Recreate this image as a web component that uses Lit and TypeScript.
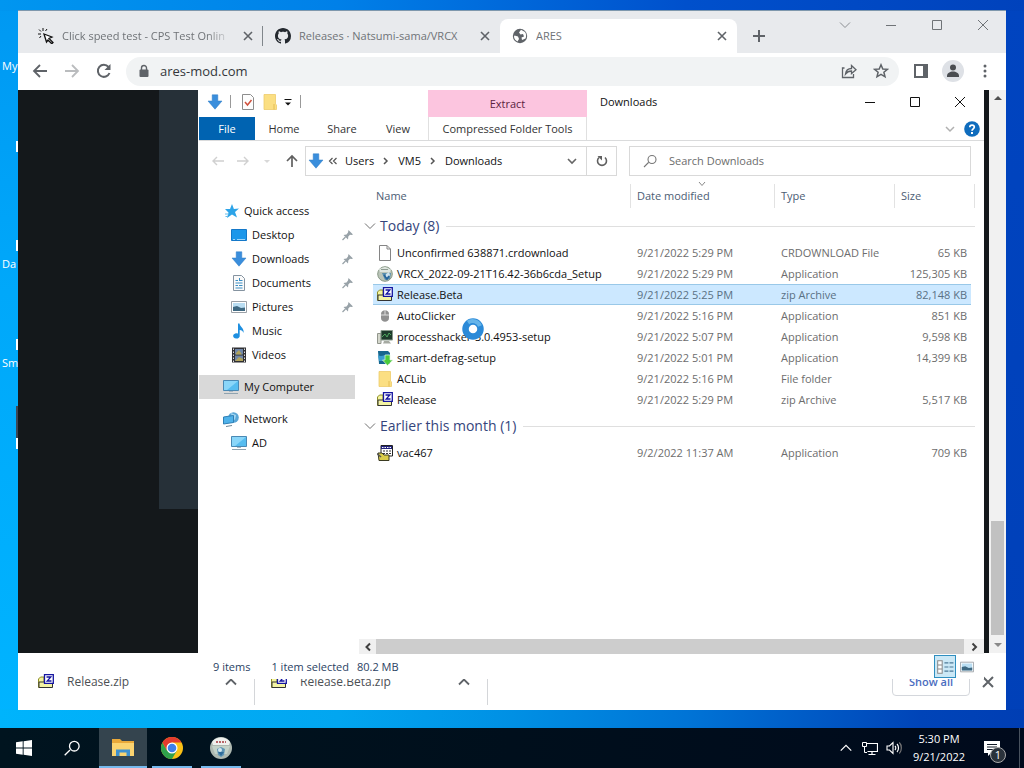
import { LitElement, html, css, svg, nothing } from "lit";
import { customElement, property } from "lit/decorators.js";
import { classMap } from "lit/directives/class-map.js";

const line = (d: string, color = "#5f6368", w = 2) =>
  svg`<path d=${d} fill="none" stroke=${color} stroke-width=${w} />`;

const glyphs: Record<string, unknown> = {
  click: svg`<path d="M6 6 14 9 11 10.500 15 14.500 13.800 15.800 10 12 8.500 14Z" fill="#fff" stroke="#111" stroke-width="1.300"/><path d="M5 0V3M1 1.500 3 3.500M0 6H3M9 1 7.500 3M1.500 10 3 8" stroke="#111" fill="none"/>`,
  github: svg`<path fill="#24292f" d="M8 0C3.580 0 0 3.580 0 8c0 3.540 2.290 6.530 5.470 7.590.4.070.550-.170.550-.380 0-.190-.010-.820-.010-1.490-2.010.370-2.530-.490-2.690-.940-.090-.230-.480-.940-.820-1.130-.280-.150-.680-.520-.010-.530.630-.010 1.080.580 1.230.820.720 1.210 1.870.870 2.330.660.070-.520.280-.870.510-1.070-1.780-.2-3.640-.890-3.640-3.950 0-.870.310-1.590.820-2.150-.080-.2-.360-1.020.080-2.120 0 0 .670-.210 2.200.820.640-.180 1.320-.270 2-.270s1.360.090 2 .270c1.530-1.040 2.200-.820 2.200-.820.440 1.100.160 1.920.080 2.120.510.560.820 1.270.820 2.150 0 3.070-1.870 3.750-3.650 3.950.290.250.540.730.540 1.480 0 1.070-.010 1.930-.010 2.200 0 .210.150.460.550.380A8 8 0 0 0 16 8c0-4.420-3.580-8-8-8z"/>`,
  globe: svg`<circle cx="8" cy="8" r="7.200" fill="#5f6368"/><path d="M2.500 7.500 6 8.500l1 2.500-1.500 2.500C3.500 12.500 2 10.500 2 8.500ZM9 1.800 7 4.500 8.500 6.500 11 6l1 2.500-2.500 1L10 12l3.500-1.500c1-2 .8-4.500-.5-6.500Z" fill="#fff"/>`,
  x: line("M4 4 12 12M12 4 4 12", "#5f6368", 1.6),
  plus: line("M8 2V14M2 8H14"),
  back: line("M15 8H2M8 2 2 8l6 6", "#5f6368", 1.8),
  forward: line("M1 8H14M8 2l6 6-6 6", "#babcbe", 1.8),
  reload: svg`${line("M13.500 10A6 6 0 1 1 12.500 4", "#5f6368", 2)}<path d="M14.500 1V7H8.500Z" fill="#5f6368"/>`,
  lock: svg`<rect x="3.500" y="6.500" width="9" height="7.500" rx="1" fill="#5f6368"/>${line("M5.500 7V5a2.500 2.500 0 0 1 5 0V7", "#5f6368", 1.4)}`,
  share: line("M3.500 5H1.500V14.500H12.500V11M4.500 11C5 7 8 5.500 10.500 5.500V2.500L15 6.800 10.500 10.500V8C8 8 6 9 4.500 11Z", "#5f6368", 1.3),
  star: line("M8 1.800 9.800 6 14.400 6.300 10.900 9.300 12 13.800 8 11.400 4 13.800 5.100 9.300 1.600 6.300 6.200 6Z", "#5f6368", 1.5),
  panel: svg`<path d="M1 1H15V15H1Z" fill="#5f6368"/><path d="M3 3H10V13H3Z" fill="#fff"/>`,
  person: svg`<circle cx="12" cy="12" r="11" fill="#dee1e6"/><circle cx="12" cy="8.500" r="3" fill="#4a4d51"/><path d="M6 17c0-3 3-4.500 6-4.500s6 1.500 6 4.500v1H6Z" fill="#4a4d51"/>`,
  dots: svg`<g fill="#5f6368"><circle cx="8" cy="3" r="1.500"/><circle cx="8" cy="8" r="1.500"/><circle cx="8" cy="13" r="1.500"/></g>`,
  winDown: line("M3 5.500 8 10.500 13 5.500", "#8b8e92", 1),
  winMin: line("M3 8.500H13", "currentColor", 1),
  winMax: line("M3.500 3.500H12.500V12.500H3.500Z", "currentColor", 1),
  winClose: line("M3 3 13 13M13 3 3 13", "currentColor", 1),
  down: svg`<path d="M5.200.8H10.800V7H15L8 15.200 1 7H5.200Z" fill="#3a8edc" stroke="#2f7dc6" stroke-width=".5"/>`,
  check: svg`<path d="M2.500.5H10.500L13.500 3.500V15.500H2.500Z" fill="#fdfdfd" stroke="#8d8d8d"/><path d="M5 8 7.500 11 11.500 6" fill="none" stroke="#d0503c" stroke-width="1.500"/>`,
  folder: svg`<path d="M2 .5H13.500V10L14.500 11V15.500H2Z" fill="#fbdf83" stroke="#edcc6c" stroke-width=".8"/><path d="M12 10V15.500" stroke="#e4bd54"/>`,
  qat: svg`<path d="M4.500 5.500H11.500" stroke="#111"/><path d="M5 8.500H11L8 11.500Z" fill="#111"/>`,
  chev: line("M4 6 8 10 12 6", "#666", 1.6),
  chevThin: line("M3 5.500 8 10.500 13 5.500", "#707070", 1),
  chevLight: line("M4 6 8 10 12 6", "#b0b0b0", 1.5),
  chevUp: line("M3 10.500 8 5.500 13 10.500", "#5f6368", 1.8),
  right: line("M6 5 9 8 6 11", "#555", 1.5),
  dbl: line("M7.500 5 4.500 8 7.500 11M11.500 5 8.500 8 11.500 11", "#555", 1.2),
  exBack: line("M14 8H3M7 4 3 8l4 4", "#d0d0d0", 1.4),
  exFwd: line("M2 8H13M9 4l4 4-4 4", "#d0d0d0", 1.4),
  exUp: line("M8 14V3M3 8 8 3l5 5", "#606060", 1.7),
  caret: svg`<path d="M5 7H11L8 10Z" fill="#d8d8d8"/>`,
  refresh: svg`${line("M5 4.500A4.500 4.500 0 1 0 11 4.500", "#606060", 1.6)}<path d="M3.500 3H8V7.500Z" fill="#606060"/>`,
  search: line("M6.500 9.500 2 14M6 6.500a4 4 0 1 0 8 0a4 4 0 1 0-8 0", "#777", 1.1),
  help: svg`<circle cx="8" cy="8" r="7.800" fill="#0f6cbd"/>${line("M5.800 6.200C5.800 3.300 10.300 3.400 10.300 6.100 10.300 7.800 8 7.900 8 9.800", "#fff", 1.7)}<path d="M7 11H9V13H7Z" fill="#fff"/>`,
  quick: svg`<path d="M9 1 10.900 6 16 5.500 12 9 14 14.500 9 11.500 4 15 5.500 9.500 2 6 7 6Z" fill="#2da4e8"/>${line("M2 11H6M2.500 13.500H5", "#67bdec", 1)}`,
  desktop: svg`<path d="M.5 2.500H15.500V13.500H.5Z" fill="#1c97ea" stroke="#1478c8"/><path d="M2 12.500H4M6 12.500H14" stroke="#9fd6fa"/>`,
  doc: svg`<path d="M2.500.5H10.500L13.500 3.500V15.500H2.500Z" fill="#fafafa" stroke="#8593a0"/><path d="M4.500 5.500H7M8 5.500H11.500M4.500 8H11.500M4.500 10.500H7M8 10.500H11.500M4.500 13H11.500" stroke="#3c8fc4"/><path d="M8.500 3V6" stroke="#3c8fc4"/>`,
  picture: svg`<path d="M.5 2.500H15.500V13.500H.5Z" fill="#fff" stroke="#9aa0a6"/><path d="M2 4H14V12H2Z" fill="#b9ddf2"/><path d="M2 8 6 7 10 9 14 8.500V12H2Z" fill="#3f6982"/>`,
  music: svg`<path d="M7 .5H8.500C9 4 13.500 5 12.500 10 12 8 10.500 7 8.700 7V12.500A3.300 2.700 0 1 1 7 10.500Z" fill="#1e8fe0"/>`,
  video: svg`<path d="M1 .5H15V15.500H1Z" fill="#2f2f33"/><path d="M4 2H12V7.500H4ZM4 8.500H12V14H4Z" fill="#6f86a8"/><path d="M5 6 8 3 11 7.500H5ZM4 14 8 10 12 12V14Z" fill="#b1a35c"/><path d="M2.500 1.500V15M13.500 1.500V15" stroke="#ddd" stroke-dasharray="1.500 1.500"/>`,
  computer: svg`<path d="M.5 1.500H15.500V11.500H.5Z" fill="#57bdf0" stroke="#4a89b4"/><path d="M1 2H15L4 11H1Z" fill="#8ad6f9"/><path d="M1 14.500H15" stroke="#8fa3b0"/><path d="M6 12H10V13H6Z" fill="#a9b8c2"/>`,
  network: svg`<circle cx="10.500" cy="6.500" r="5.300" fill="#5aa6d6"/><path d="M8 2 13 4 12 9 9 7Z" fill="#a4d7f2"/><path d="M.5 6 10.500 4.500V11.500L.5 13Z" fill="#4fb2ea" stroke="#2e7fb5"/><path d="M3 15.500 9 14.500" stroke="#6d8494"/>`,
  pin: svg`<path d="M9.500 3 14 7.500 12.500 8 11 7.700 9.300 9.500 9 12.500 4.500 8 7.500 7.500 9 5.500Z" fill="#98a2a8"/><path d="M6.500 10 3.500 13" stroke="#98a2a8" stroke-width="1.200"/>`,
  blank: svg`<path d="M2.500.5H10L13.500 4V15.500H2.500Z" fill="#fff" stroke="#858585"/><path d="M10 .5V4H13.500" fill="none" stroke="#858585"/>`,
  setup: svg`<circle cx="8" cy="8" r="7.300" fill="#bac4b8" stroke="#879785"/><path d="M2 3 8 1 14 3.500 13 6H3Z" fill="#dfe6e0"/><path d="M5 7H14L13 13 8 14Z" fill="#598ead"/><path d="M9 8 12 6 13 9 11 12 8.500 11Z" fill="#cfe3ee"/><path d="M7 9 10 13 12 10" stroke="#24649b" stroke-width="1.600" fill="none"/><path d="M4 3.500H11" stroke="#8d9a90"/>`,
  zip: svg`<path d="M.5 5 2.500 3H6V13.500H.5Z" fill="#f5f59b" stroke="#8c8c2a"/><path d="M1 8H14.500V13.500H1Z" fill="#f4f4a3" stroke="#333"/><path d="M6.500.7H15.300V9.300H6.500Z" fill="#fff" stroke="#1515a0" stroke-width="1.300"/><path d="M8.500 3H12.800L9.200 7H13.500" fill="none" stroke="#1515a0" stroke-width="1.300"/>`,
  mouse: svg`<path d="M4 6C4 1 12 1 12 6V10C12 15 4 15 4 10Z" fill="#909090"/><path d="M8 2V7M4 7H12" stroke="#ddd"/>`,
  hacker: svg`<path d="M.5 4.500H4V14.500H.5Z" fill="#d4d7cc" stroke="#92968d"/><path d="M4 1.500H15.500V11H4Z" fill="#1e3a2b" stroke="#8a9a8c"/><path d="M5 8 8 5 10 8 12 4 14 6" stroke="#4fa65f" fill="none"/><path d="M7 12H12L14 14.500H6Z" fill="#a6aaa2"/>`,
  defrag: svg`<path d="M1 1H11L13 3V14H2Z" fill="#17678f"/><path d="M1 5C5 8 9 3 13 5V11H2Z" fill="#3a9ed0"/><path d="M8 5H13V10H15.800L10.500 15.500 5.500 10H8Z" fill="#4ccb3c" stroke="#e1f5de" stroke-width=".7"/>`,
  vac: svg`<path d="M4 .5H15.500V11H4Z" fill="#fff" stroke="#222"/><path d="M4 1H15V4H4Z" fill="#24247e"/><path d="M5 2.500H14" stroke="#fff" stroke-dasharray="1.500 1"/><path d="M6 6H14M6 8.500H14" stroke="#333" stroke-dasharray="2 1"/><path d="M1 8H5L7 10H12V15.500H2Z" fill="#d9cc4a" stroke="#3b3b22"/><path d="M0 8.500 4 12" stroke="#555" stroke-width="1.500"/>`,
  details: svg`<path d="M1.500 2.500H5.500V13.500H1.500ZM1.500 6.200H5.500M1.500 9.800H5.500" fill="#fff" stroke="#888" stroke-width=".9"/><path d="M7.500 4.300H15.500M7.500 8H15.500M7.500 11.700H15.500" stroke="#4c7896" stroke-dasharray="3.500 1" stroke-width="1"/>`,
  start: svg`<path fill="#fff" d="M0 2.300 6.700 1.300V7.600H0ZM7.600 1.200 16 0V7.600H7.600ZM0 8.500H6.700V14.700L0 13.700ZM7.600 8.500H16V16L7.600 14.800Z"/>`,
  taskSearch: line("M6 10 .7 15.300M5.500 6.200a4.800 4.800 0 1 0 9.600 0a4.800 4.800 0 1 0-9.600 0", "#fff", 1.3),
  explorer: svg`<path d="M1 3H9L11 5H23V20H1Z" fill="#e9a93a"/><path d="M1 7H23V20H1Z" fill="#fbd470"/><path d="M5 20V13.500H19V20H15.500V16.500H8.500V20Z" fill="#3f91cf"/>`,
  chrome: svg`<circle cx="12" cy="12" r="11" fill="#fbc116"/><path d="M2.470 6.500A11 11 0 0 0 12 23L16.800 14.700 7 14.500Z" fill="#2fa24c"/><path d="M2.470 6.500A11 11 0 0 1 21.530 6.500H12L7 14.500Z" fill="#e33b2e"/><circle cx="12" cy="12" r="5.500" fill="#fff"/><circle cx="12" cy="12" r="4.300" fill="#3f7fea"/>`,
  vrcx: svg`<circle cx="12" cy="12" r="11" fill="#aeb9b1"/><path d="M3 6C7 0 17 0 21 6L20 9H4Z" fill="#eef1ee"/><path d="M7 6H17" stroke="#b8666a" stroke-width="2" stroke-dasharray="2 1"/><path d="M3 10H21L18 18H6Z" fill="#c3d2c8"/><path d="M8 13 12 11 16 13 15 19 12 21 9 19Z" fill="#5d94b4"/><path d="M9 16H15L12 20Z" fill="#2f6c9a"/><circle cx="11" cy="14" r="2" fill="#d4e8f0"/>`,
  trayUp: line("M2 11 8 5l6 6", "#fff", 1.4),
  trayNet: svg`<path d="M4.500 3.500H15.500V11.500H5.500M10 12V14.500M6.500 14.500H13.500" fill="none" stroke="#fff" stroke-width="1.200"/><path d="M.5 2.500H4.500V6.500H.5ZM2.500 7V12.500H5" fill="none" stroke="#fff"/>`,
  sound: svg`<path d="M1 6H3.500L7 2.500V13.500L3.500 10H1Z" fill="none" stroke="#fff" stroke-width="1.100"/><path d="M9 6C10 7 10 9 9 10M11 4C13 6 13 10 11 12" fill="none" stroke="#fff" stroke-width="1.200"/><path d="M13.300 2.500C16 5 16 11 13.300 13.500" fill="none" stroke="#777" stroke-width="1.200"/>`,
  note: svg`<path d="M0 1H16V13H7L4 16V13H0Z" fill="#fff"/><path d="M3 4.500H13M3 7H13M3 9.500H13" stroke="#111a26"/>`,
  sUp: svg`<path d="M4 10H12L8 6Z" fill="#505050"/>`,
  sDown: svg`<path d="M4 6H12L8 10Z" fill="#8a8a8a"/>`,
  sLeft: line("M10 4.500 6.500 8 10 11.500", "#404040", 2),
  sRight: line("M6.500 4.500 10 8 6.500 11.500", "#404040", 2),
};

const ico = (name: string, size = 16) => {
  const box = ["explorer", "chrome", "vrcx", "person"].includes(name) ? 24 : 16;
  return html`<svg class="ico" width=${size} height=${size} viewBox="0 0 ${box} ${box}" aria-hidden="true">${glyphs[name]}</svg>`;
};

const base = css`
  * { box-sizing: border-box; }
  :host { font: 11px/16px "Open Sans", "Noto Sans", sans-serif; color: #111; }
  button { font: inherit; color: inherit; background: none; border: 0; padding: 0; margin: 0; display: flex; align-items: center; justify-content: center; flex: none; white-space: nowrap; }
  a { color: inherit; text-decoration: none; }
  input { font: inherit; color: inherit; background: none; border: 0; padding: 0; min-width: 0; outline: 0; }
  .ico { display: block; flex: none; }
`;

@customElement("browser-window")
class BrowserWindow extends LitElement {
  static styles = [base, css`
    :host { display: flex; flex-direction: column; background: #fff; border-top: 1px solid #7f98ad; }
    .strip { display: flex; height: 42px; padding: 8px 0 0 8px; background: #e8eaed; color: #6f7377; flex: none; }
    .tabs { display: flex; flex: 0 1 711px; min-width: 0; }
    .tab { flex: 1; min-width: 0; display: flex; align-items: center; padding: 0 7px 0 12px; gap: 8px; }
    .tab.divided { background: linear-gradient(#80868b, #80868b) right center / 1px 20px no-repeat; }
    .tab.active { background: #fff; border-radius: 8px 8px 0 0; }
    .title { flex: 1; overflow: hidden; white-space: nowrap; }
    .divided .title { mask-image: linear-gradient(90deg, #000 85%, transparent); }
    .add { width: 44px; }
    .controls { display: flex; margin-left: auto; align-self: flex-start; height: 12px; }
    .controls button { width: 46px; }
    .bar { display: flex; align-items: center; height: 37px; padding: 0 5px 1px 6px; flex: none; }
    .nav { width: 32px; height: 32px; }
    .omni { flex: 1; display: flex; align-items: center; height: 29px; border-radius: 15px; background: #f1f3f4; margin: 0 6px; padding: 0 2px 0 10px; color: #34373b; }
    .omni input { flex: 1; margin-left: 8px; font-size: 13px; }
    .omni button { width: 32px; }
    .page { flex: 1; min-height: 0; display: flex; background: #14181b; }
    .panel { margin-left: 141px; flex: 1; height: 419px; background: #263038; margin-right: 400px; }
    .scroll { width: 17px; background: #f1f1f1; display: flex; flex-direction: column; align-items: center; justify-content: space-between; }
    .scroll .thumb { width: 13px; height: 114px; margin-top: auto; background: #c1c1c1; }
    .scroll .ico:last-child { margin-top: 2px; }
    .downloads { display: flex; height: 57px; align-items: center; flex: none; font-size: 12px; color: #4c5054; }
    .item { display: flex; align-items: center; width: 237px; height: 46px; padding: 0 15px 0 20px; border-right: 1px solid #d4d6d9; }
    .item + .item { width: 233px; padding-left: 16px; }
    .item span { flex: 1; margin-left: 13px; }
    .all { margin-left: auto; width: 78px; height: 29px; border: 1px solid #d4d7dc; border-radius: 4px; color: #4a6dc0; font-size: 11px; font-weight: 600; }
    .close { width: 36px; }
  `];

  render() {
    const tabs = [
      { icon: "click", title: "Click speed test - CPS Test Onlin", cls: "divided" },
      { icon: "github", title: "Releases · Natsumi-sama/VRCX", cls: "" },
      { icon: "globe", title: "ARES", cls: "active" },
    ];
    return html`
      <div class="strip">
        <div class="tabs" role="tablist">
          ${tabs.map(t => html`<div class="tab ${t.cls}" role="tab">${ico(t.icon)}<span class="title">${t.title}</span><button aria-label="Close tab">${ico("x")}</button></div>`)}
        </div>
        <button class="add" aria-label="New tab">${ico("plus")}</button>
        <div class="controls">
          <button aria-label="Search tabs">${ico("winDown")}</button>
          <button aria-label="Minimize">${ico("winMin")}</button>
          <button aria-label="Maximize">${ico("winMax")}</button>
          <button aria-label="Close">${ico("winClose")}</button>
        </div>
      </div>
      <div class="bar">
        <button class="nav" aria-label="Back">${ico("back")}</button>
        <button class="nav" aria-label="Forward">${ico("forward")}</button>
        <button class="nav" aria-label="Reload">${ico("reload")}</button>
        <div class="omni">${ico("lock")}<input aria-label="Address" .value=${"ares-mod.com"} />
          <button aria-label="Share">${ico("share")}</button><button aria-label="Bookmark">${ico("star")}</button></div>
        <button class="nav" aria-label="Side panel">${ico("panel")}</button>
        <button class="nav" aria-label="Profile">${ico("person", 24)}</button>
        <button class="nav" aria-label="Menu">${ico("dots")}</button>
      </div>
      <div class="page"><div class="panel"></div>
        <div class="scroll">${ico("sUp")}<div class="thumb"></div>${ico("sDown")}</div></div>
      <div class="downloads">
        <div class="item">${ico("zip")}<span>Release.zip</span><button aria-label="More">${ico("chevUp")}</button></div>
        <div class="item">${ico("zip")}<span>Release.Beta.zip</span><button aria-label="More">${ico("chevUp")}</button></div>
        <button class="all">Show all</button>
        <button class="close" aria-label="Close bar">${ico("x", 20)}</button>
      </div>`;
  }
}

interface Entry { icon: string; name: string; date: string; type: string; size: string; on?: boolean; }

const groups: { label: string; rows: Entry[] }[] = [
  { label: "Today (8)", rows: [
    { icon: "blank", name: "Unconfirmed 638871.crdownload", date: "9/21/2022 5:29 PM", type: "CRDOWNLOAD File", size: "65 KB" },
    { icon: "setup", name: "VRCX_2022-09-21T16.42-36b6cda_Setup", date: "9/21/2022 5:29 PM", type: "Application", size: "125,305 KB" },
    { icon: "zip", name: "Release.Beta", date: "9/21/2022 5:25 PM", type: "zip Archive", size: "82,148 KB", on: true },
    { icon: "mouse", name: "AutoClicker", date: "9/21/2022 5:16 PM", type: "Application", size: "851 KB" },
    { icon: "hacker", name: "processhacker-3.0.4953-setup", date: "9/21/2022 5:07 PM", type: "Application", size: "9,598 KB" },
    { icon: "defrag", name: "smart-defrag-setup", date: "9/21/2022 5:01 PM", type: "Application", size: "14,399 KB" },
    { icon: "folder", name: "ACLib", date: "9/21/2022 5:16 PM", type: "File folder", size: "" },
    { icon: "zip", name: "Release", date: "9/21/2022 5:29 PM", type: "zip Archive", size: "5,517 KB" },
  ] },
  { label: "Earlier this month (1)", rows: [
    { icon: "vac", name: "vac467", date: "9/2/2022 11:37 AM", type: "Application", size: "709 KB" },
  ] },
];

@customElement("file-table")
class FileTable extends LitElement {
  @property({ attribute: false }) groups = groups;

  static styles = [base, css`
    :host { display: block; }
    table { width: 100%; table-layout: fixed; border-collapse: separate; border-spacing: 0; color: #6d6d6d; }
    th { font-weight: 400; text-align: left; }
    th, td { padding: 0; white-space: nowrap; }
    .lead { width: 9px; }
    .date { width: 144px; }
    .type { width: 120px; }
    .size { width: 76px; }
    .tail { width: 4px; }
    thead th { height: 29px; color: #4c5d74; background: linear-gradient(#e2e2e2, #e2e2e2) right 0 top 3px / 1px 24px no-repeat; }
    thead th.lead, thead th.size { background: none; }
    thead th:nth-child(2) { padding-left: 3px; }
    .date, .type, .size { padding-left: 6px; }
    thead .date div { display: grid; }
    .mark { display: block; height: 6px; width: 8px; margin: 0 0 0 61px; }
    thead .date span { height: 23px; line-height: 18px; }
    .group button { width: 100%; height: 32px; justify-content: flex-start; font-size: 14px; color: #35457c; }
    .group i { flex: 1; height: 1px; margin-left: 7px; background: #dfdfdf; }
    .group .ico { margin: 0 2px 0 -2px; }
    td { height: 21px; }
    .file { display: flex; align-items: center; gap: 4px; padding-left: 4px; color: #111; }
    td.size { text-align: right; padding: 0 4px 0 0; }
    .on td:nth-child(n+2):nth-child(-n+5) { background: #cce8ff; box-shadow: inset 0 1px #99c8e8, inset 0 -1px #99c8e8; }
    .on td { color: #5a7184; }
  `];

  render() {
    return html`<table>
      <thead><tr><th class="lead"></th><th>Name</th>
        <th class="date"><div><svg class="mark" viewBox="0 0 8 6" aria-hidden="true"><path d="M1 1 4 4.500 7 1" fill="none" stroke="#888"/></svg><span>Date modified</span></div></th>
        <th class="type">Type</th><th class="size">Size</th><th class="tail"></th></tr></thead>
      ${this.groups.map(g => html`<tbody>
        <tr class="group"><th colspan="6"><button>${ico("chevThin")}${g.label}<i></i></button></th></tr>
        ${g.rows.map(r => html`<tr class=${classMap({ on: !!r.on })}><td></td>
          <td><div class="file">${ico(r.icon)}${r.name}</div></td>
          <td class="date">${r.date}</td><td class="type">${r.type}</td><td class="size">${r.size}</td><td></td></tr>`)}
      </tbody>`)}
    </table>`;
  }
}

@customElement("explorer-window")
class ExplorerWindow extends LitElement {
  static styles = [base, css`
    :host { display: flex; flex-direction: column; background: #fff; border-left: 1px solid #fff; }
    .head { display: flex; height: 51px; border-bottom: 1px solid #dadbdc; flex: none; color: #333; }
    .head > div { display: flex; flex-direction: column; }
    .left { width: 229px; }
    .quick, .title { display: flex; align-items: center; height: 27px; flex: none; }
    .quick { padding: 0 0 4px 8px; }
    .sep { width: 1px; height: 13px; background: #999; }
    .quick .sep:nth-of-type(1) { margin: 0 9px 0 7px; }
    .quick .ico + .ico { margin-left: 6px; }
    .quick .ico + .ico + .ico { margin-left: 2px; }
    .quick .sep:last-child { margin-left: 4px; }
    .tabs { display: flex; height: 23px; }
    .tabs button { width: 58px; }
    .tabs .file { width: 56px; background: #0063b1; color: #fff; }
    .tabs .view { width: 54px; }
    .context { width: 159px; border: solid #e0e0e0; border-width: 0 1px; text-align: center; }
    .context b { font-weight: 400; background: #fcc5df; height: 27px; line-height: 28px; margin: 0 -1px; color: #5b2340; }
    .context button { height: 23px; }
    .right { flex: 1; }
    .title { padding: 0 2px 4px 13px; color: #111; }
    .title button { width: 45px; }
    .title button:first-of-type { margin-left: auto; }
    .aid { display: flex; justify-content: flex-end; align-items: center; height: 23px; gap: 6px; padding-right: 4px; }
    .address { display: flex; align-items: center; height: 40px; flex: none; padding: 0 13px 0 11px; color: #111; }
    .arrows { display: flex; justify-content: space-between; width: 90px; margin-right: 5px; }
    .path { flex: 1 1 312px; display: flex; align-items: center; height: 30px; border: 1px solid #d9d9d9; padding-left: 2px; min-width: 0; }
    .path .drop { margin-left: auto; width: 29px; }
    .path .reload { width: 30px; height: 28px; border-left: 1px solid #d9d9d9; }
    .path > .ico:nth-of-type(2) { margin-left: 1px; }
    .path a { margin: 0 4px; }
    .find { flex: 1 1 342px; display: flex; align-items: center; height: 30px; border: 1px solid #d9d9d9; margin-left: 12px; padding-left: 12px; gap: 11px; }
    .find input { flex: 1; }
    .find input::placeholder { color: #6d6d6d; opacity: 1; }
    .main { display: flex; flex: 1; min-height: 0; }
    nav { width: 156px; padding-top: 18px; flex: none; }
    nav ul { list-style: none; margin: 0 0 8px; padding: 0; }
    nav a { display: flex; align-items: center; height: 24px; gap: 5px; padding: 0 0 0 24px; }
    nav .sub { padding-left: 32px; }
    nav .on { background: #d9d9d9; }
    nav .push { margin-left: auto; display: flex; }
    .pane { flex: 1; min-width: 0; margin-left: 4px; display: flex; flex-direction: column; }
    file-table { flex: 1; min-height: 0; overflow: hidden; margin: 0 9px 0 5px; }
    .hscroll { height: 15px; display: flex; background: #f0f0f0; flex: none; }
    .hscroll button { width: 17px; }
    .hscroll i { flex: 1; background: #cdcdcd; }
    .hscroll button:last-child { width: 20px; }
    footer { display: flex; align-items: center; height: 25px; padding: 0 8px 0 14px; flex: none; color: #2b4263; }
    footer span + span { margin-left: 21px; }
    footer span + span + span { margin-left: 8px; }
    footer button { width: 18px; height: 23px; }
    footer .on { margin-left: auto; margin-right: 2px; width: 22px; background: #cbe8f6; border: 1px solid #2f8fc0; }
  `];

  private link(icon: string, label: string, sub = false, pin = false, on = false) {
    return html`<li><a href="#" class=${classMap({ sub, on })}>${ico(icon)}${label}${pin ? html`<span class="push">${ico("pin")}</span>` : nothing}</a></li>`;
  }

  render() {
    return html`
      <header class="head">
        <div class="left">
          <div class="quick">${ico("down")}<span class="sep"></span>${ico("check")}${ico("folder")}${ico("qat")}<span class="sep"></span></div>
          <div class="tabs"><button class="file">File</button><button>Home</button><button>Share</button><button class="view">View</button></div>
        </div>
        <div class="context"><b>Extract</b><button>Compressed Folder Tools</button></div>
        <div class="right">
          <div class="title">Downloads
            <button aria-label="Minimize">${ico("winMin")}</button><button aria-label="Maximize">${ico("winMax")}</button><button aria-label="Close">${ico("winClose")}</button></div>
          <div class="aid"><button aria-label="Expand ribbon">${ico("chevLight")}</button><button aria-label="Help">${ico("help")}</button></div>
        </div>
      </header>
      <div class="address">
        <div class="arrows"><button aria-label="Back">${ico("exBack")}</button><button aria-label="Forward">${ico("exFwd")}</button><button aria-label="Recent">${ico("caret")}</button><button aria-label="Up">${ico("exUp")}</button></div>
        <div class="path">${ico("down")}${ico("dbl")}<a href="#">Users</a>${ico("right")}<a href="#">VM5</a>${ico("right")}<a href="#">Downloads</a>
          <button class="drop" aria-label="History">${ico("chev")}</button><button class="reload" aria-label="Refresh">${ico("refresh")}</button></div>
        <label class="find">${ico("search")}<input placeholder="Search Downloads" aria-label="Search Downloads" /></label>
      </div>
      <div class="main">
        <nav>
          <ul>${this.link("quick", "Quick access")}${this.link("desktop", "Desktop", true, true)}${this.link("down", "Downloads", true, true)}${this.link("doc", "Documents", true, true)}${this.link("picture", "Pictures", true, true)}${this.link("music", "Music", true)}${this.link("video", "Videos", true)}</ul>
          <ul>${this.link("computer", "My Computer", false, false, true)}</ul>
          <ul>${this.link("network", "Network")}${this.link("computer", "AD", true)}</ul>
        </nav>
        <div class="pane">
          <file-table></file-table>
          <div class="hscroll"><button aria-label="Scroll left">${ico("sLeft")}</button><i></i><button aria-label="Scroll right">${ico("sRight")}</button></div>
        </div>
      </div>
      <footer><span>9 items</span><span>1 item selected</span><span>80.2 MB</span>
        <button class="on" aria-label="Details">${ico("details", 18)}</button><button aria-label="Large icons">${ico("picture", 14)}</button></footer>`;
  }
}

@customElement("task-bar")
class TaskBar extends LitElement {
  static styles = [base, css`
    :host { display: flex; align-items: stretch; background: linear-gradient(90deg, #00141f, #000f1c 50%, #000a1c); color: #fff; }
    .btn { width: 48px; }
    .app { width: 40px; margin: 0 4px 0 5px; border-bottom: 2px solid #76b9ed; padding-top: 2px; }
    .app.on { width: 48px; margin: 0 0 0 3px; background: #34444e; }
    .tray { display: flex; align-items: center; margin-left: auto; }
    .tray > button { width: 24px; height: 40px; }
    .clock { width: 66px; text-align: center; line-height: 18px; }
    .tray .notes { width: 47px; padding-right: 8px; position: relative; }
    .count { position: absolute; left: 18px; top: 19px; width: 16px; height: 16px; border: 1px solid #aaa; border-radius: 8px; background: #2a323b; line-height: 14px; }
    .tray .peek { width: 5px; border-left: 1px solid #48525e; }
  `];

  render() {
    return html`
      <button class="btn" aria-label="Start">${ico("start")}</button>
      <button class="btn" aria-label="Search">${ico("taskSearch")}</button>
      <button class="app on" aria-label="File Explorer">${ico("explorer", 24)}</button>
      <button class="app" aria-label="Chrome">${ico("chrome", 24)}</button>
      <button class="app" aria-label="Setup">${ico("vrcx", 24)}</button>
      <div class="tray">
        <button aria-label="Hidden icons">${ico("trayUp", 14)}</button><button aria-label="Network">${ico("trayNet")}</button><button aria-label="Volume">${ico("sound")}</button>
        <div class="clock"><div>5:30 PM</div><div>9/21/2022</div></div>
        <button class="notes" aria-label="Notifications">${ico("note")}<span class="count">1</span></button>
        <button class="peek" aria-label="Show desktop"></button>
      </div>`;
  }
}

@customElement("app-root")
class AppRoot extends LitElement {
  static styles = [base, css`
    :host { display: grid; grid-template-rows: 1fr 40px; height: 100vh; overflow: hidden; background: #0078d7; }
    .desktop { position: relative; background:
      linear-gradient(90deg, #0096f0, #0080e8 33%, #0050cc 67%, #0042bc) top / 100% 11px no-repeat,
      linear-gradient(90deg, #00b4fc, #02a6f0 33%, #0090e4 50%, #0074d6 67%, #0044b8 90%, #003eb4) bottom / 100% 19px no-repeat,
      linear-gradient(#0098f2, #00a8fa 40%, #00b4ff) left / 50% 100% no-repeat,
      linear-gradient(#0044c0, #0040b8) right / 50% 100% no-repeat; }
    .shortcuts { padding-top: 42px; color: #fff; }
    .shortcut { width: 18px; height: 99px; border-right: 2px solid; border-image: linear-gradient(#fff 12px, transparent 12px) 1; padding: 16px 0 0 2px; }
    .shortcut:first-child { border-image: none; border-color: transparent; }
    .shortcut.dark { border-image: linear-gradient(#fff 12px, transparent 12px 67px, #3c4654 67px) 1; }
    browser-window { position: absolute; inset: 10px 18px 18px 18px; }
    explorer-window { position: absolute; inset: 90px 40px 49px 198px; }
    .busy { position: absolute; left: 461px; top: 317px; }
  `];

  render() {
    return html`
      <main class="desktop">
        <div class="shortcuts">${["My", "", "Da", "Sm", ""].map((t, i) => html`<div class="shortcut ${i === 3 ? "dark" : ""}">${t}</div>`)}</div>
        <browser-window></browser-window>
        <explorer-window></explorer-window>
        <svg class="busy" width="24" height="24" viewBox="0 0 24 24" aria-hidden="true"><circle cx="12" cy="12" r="7.500" fill="#fff" stroke="#2b8ad8" stroke-width="6.500"/><path d="M7 5.500A8 8 0 0 1 19 9" fill="none" stroke="#66b5ea" stroke-width="4"/></svg>
      </main>
      <task-bar></task-bar>`;
  }
}
